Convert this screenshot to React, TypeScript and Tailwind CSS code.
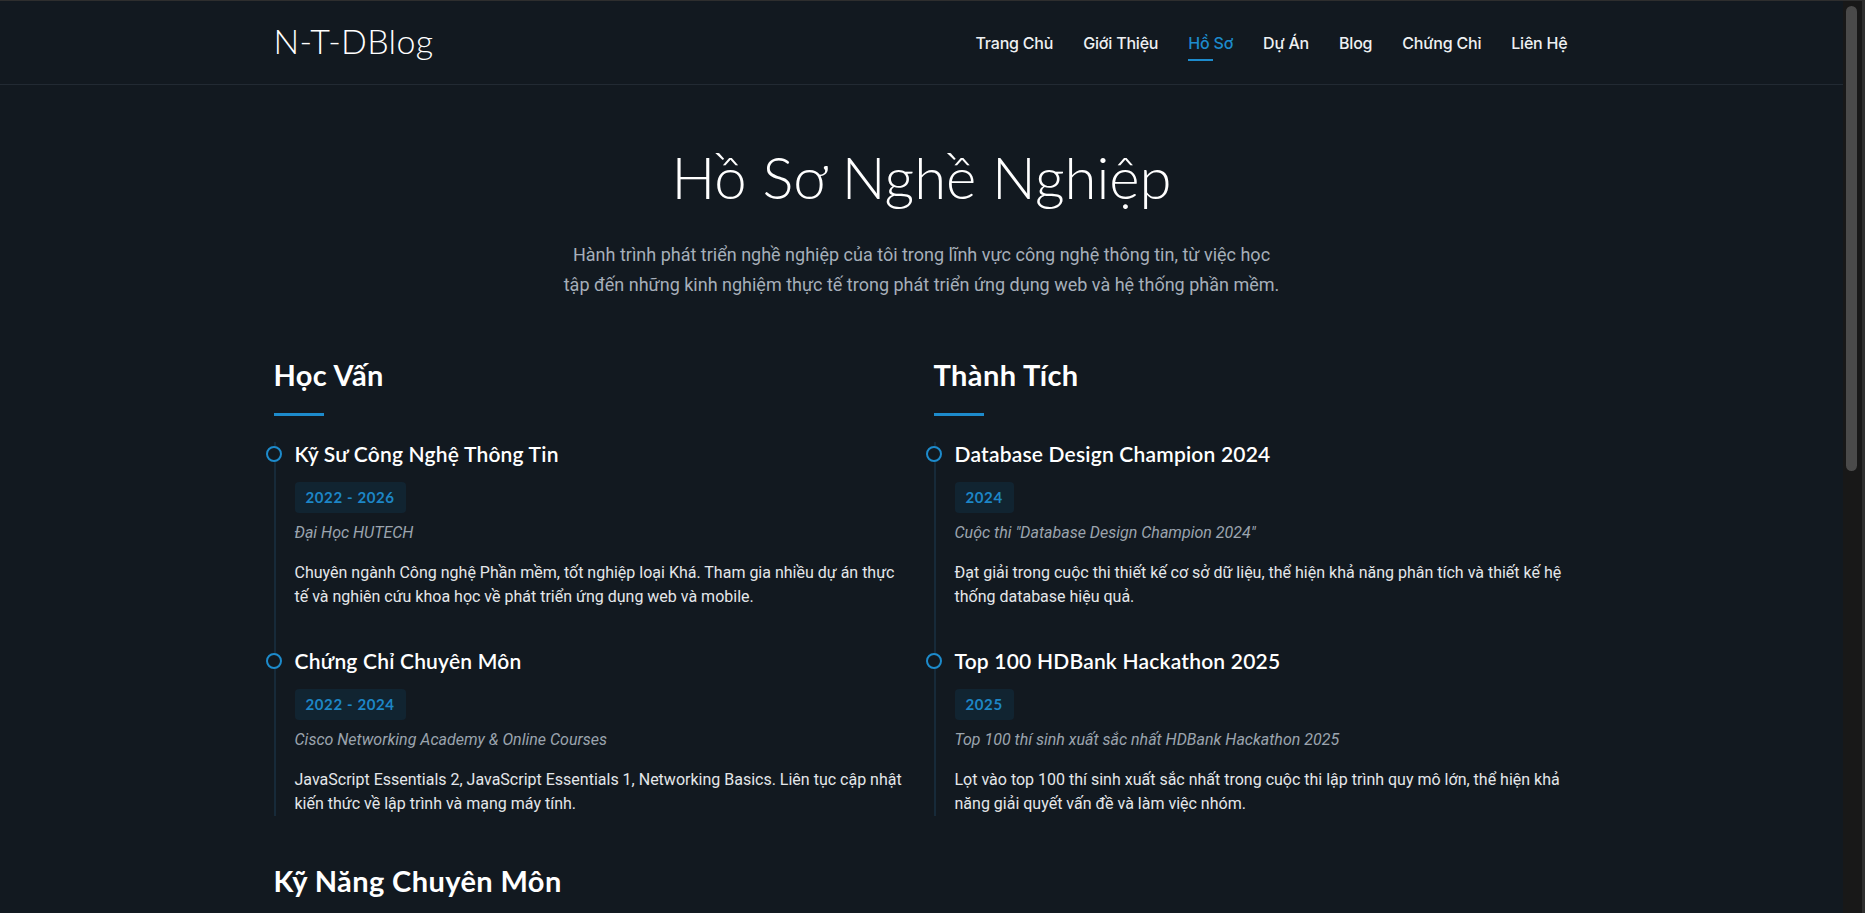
import React from "react";

const nav = ["Trang Chủ", "Giới Thiệu", "Hồ Sơ", "Dự Án", "Blog", "Chứng Chỉ", "Liên Hệ"];

type Item = { title: string; tag: string; sub: string; desc: string };

const education: Item[] = [
  {
    title: "Kỹ Sư Công Nghệ Thông Tin",
    tag: "2022 - 2026",
    sub: "Đại Học HUTECH",
    desc: "Chuyên ngành Công nghệ Phần mềm, tốt nghiệp loại Khá. Tham gia nhiều dự án thực tế và nghiên cứu khoa học về phát triển ứng dụng web và mobile.",
  },
  {
    title: "Chứng Chỉ Chuyên Môn",
    tag: "2022 - 2024",
    sub: "Cisco Networking Academy & Online Courses",
    desc: "JavaScript Essentials 2, JavaScript Essentials 1, Networking Basics. Liên tục cập nhật kiến thức về lập trình và mạng máy tính.",
  },
];

const awards: Item[] = [
  {
    title: "Database Design Champion 2024",
    tag: "2024",
    sub: 'Cuộc thi "Database Design Champion 2024"',
    desc: "Đạt giải trong cuộc thi thiết kế cơ sở dữ liệu, thể hiện khả năng phân tích và thiết kế hệ thống database hiệu quả.",
  },
  {
    title: "Top 100 HDBank Hackathon 2025",
    tag: "2025",
    sub: "Top 100 thí sinh xuất sắc nhất HDBank Hackathon 2025",
    desc: "Lọt vào top 100 thí sinh xuất sắc nhất trong cuộc thi lập trình quy mô lớn, thể hiện khả năng giải quyết vấn đề và làm việc nhóm.",
  },
];

const skills = [
  { name: "HTML / CSS", v: 90 },
  { name: "JavaScript", v: 85 },
  { name: "React", v: 80 },
  { name: "Node.js", v: 75 },
];

function Timeline({ items }: { items: Item[] }) {
  return (
    <div className="mt-[26px] border-l-2 border-[#172a39] pl-[19px]">
      {items.map((it, i) => (
        <div key={i} className={"relative " + (i < items.length - 1 ? "mb-[40px]" : "")}>
          <span className="absolute left-[-29px] top-[4px] h-[16px] w-[16px] rounded-full border-2 border-[#1d8bcc] bg-[#121920]" />
          <h3 className="font-['Lato',sans-serif] text-[21px] font-semibold leading-[24px] tracking-[0.2px] text-white">{it.title}</h3>
          <div className="mt-4 inline-block rounded-[4px] bg-[#112431] px-[11px] py-[6px] font-['Lato',sans-serif] text-[15px] font-bold leading-[19px] tracking-[0.6px] text-[#1d86c6]">
            {it.tag}
          </div>
          <p className="mt-2 font-['Roboto',sans-serif] text-[16px] italic leading-[24px] text-[#9ba4ae]">{it.sub}</p>
          <p className="mt-4 font-['Roboto',sans-serif] text-[16px] leading-[24px] text-[#e4e7ea]">{it.desc}</p>
        </div>
      ))}
    </div>
  );
}

function Column({ title, items }: { title: string; items: Item[] }) {
  return (
    <div>
      <h2 className="font-['Lato',sans-serif] text-[29px] font-bold leading-[34px] tracking-[0.4px] text-white">{title}</h2>
      <div className="mt-[21px] h-[3px] w-[50px] bg-[#1d8bcc]" />
      <Timeline items={items} />
    </div>
  );
}

export default function App() {
  return (
    <div className="flex h-[913px] overflow-hidden border-t border-[#2e2e2e] bg-[#121920]">
      <div className="h-full min-w-0 flex-1 overflow-hidden">
        <header className="border-b border-[#222a33]">
          <div className="mx-auto flex h-[83px] max-w-[1296px] items-center justify-between">
            <a className="pb-[3px] font-['Lato',sans-serif] text-[34px] font-light leading-none tracking-[0.3px] text-white">N-T-DBlog</a>
            <nav className="flex items-center gap-[30px] pr-[2px]">
              {nav.map((n) => {
                const active = n === "Hồ Sơ";
                return (
                  <div key={n} className="relative">
                    <span
                      className={
                        "font-['Inter',sans-serif] text-[16px] font-medium tracking-[-0.2px] " +
                        (active ? "text-[#1d8bcc]" : "text-[#eef0f2]")
                      }
                    >
                      {n}
                    </span>
                    {active && <span className="absolute left-0 top-[28px] h-[2px] w-[25px] bg-[#1d8bcc]" />}
                  </div>
                );
              })}
            </nav>
          </div>
        </header>

        <main className="mx-auto max-w-[1296px]">
          <section className="pt-[58px] text-center">
            <h1 className="font-['Lato',sans-serif] text-[58px] font-light leading-[67px] text-white">Hồ Sơ Nghề Nghiệp</h1>
            <p className="mx-auto mt-[30px] max-w-[720px] font-['Roboto',sans-serif] text-[18px] leading-[30px] text-[#a6afba]">
              Hành trình phát triển nghề nghiệp của tôi trong lĩnh vực công nghệ thông tin, từ việc học tập đến những kinh nghiệm thực tế trong phát triển ứng dụng web và hệ thống phần mềm.
            </p>
          </section>

          <div className="mt-[58px] grid grid-cols-2 gap-x-6">
            <Column title="Học Vấn" items={education} />
            <Column title="Thành Tích" items={awards} />
          </div>

          <section className="mt-12 pb-24">
            <h2 className="font-['Lato',sans-serif] text-[29px] font-bold leading-[34px] tracking-[0.4px] text-white">Kỹ Năng Chuyên Môn</h2>
            <div className="mt-[21px] h-[3px] w-[50px] bg-[#1d8bcc]" />
            <div className="mt-8 grid grid-cols-2 gap-x-6 gap-y-8">
              {skills.map((s) => (
                <div key={s.name}>
                  <div className="flex justify-between font-['Roboto',sans-serif] text-[16px] text-[#e4e7ea]">
                    <span>{s.name}</span>
                    <span className="text-[#1d8bcc]">{s.v}%</span>
                  </div>
                  <div className="mt-3 h-[8px] rounded-full bg-[#1a2631]">
                    <div className="h-full rounded-full bg-[#1d8bcc]" style={{ width: `${s.v}%` }} />
                  </div>
                </div>
              ))}
            </div>
          </section>
        </main>
      </div>

      <div className="h-full w-[22px] shrink-0 border-r-[3px] border-[#2e2e2e] bg-[#181818] pl-[3px] pt-[5px]">
        <div className="h-[465px] w-[11px] rounded-full bg-[#4a4a4a]" />
      </div>
    </div>
  );
}
